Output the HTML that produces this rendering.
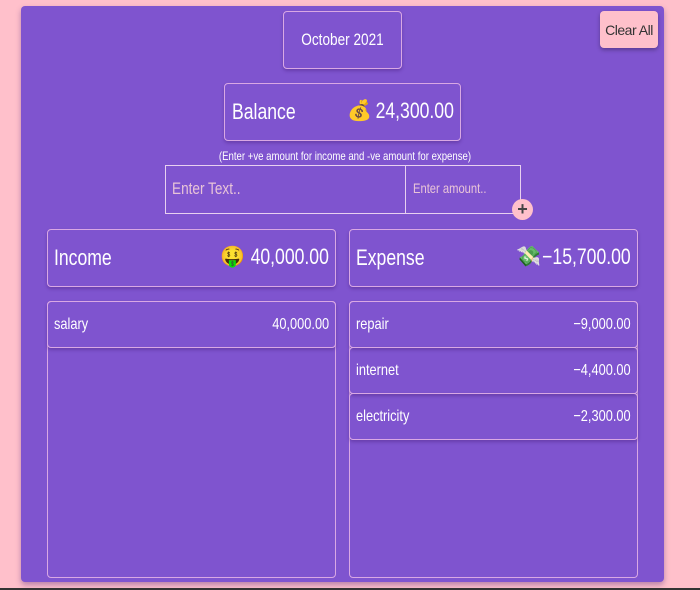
<!DOCTYPE html>
<html><head><style>
*{box-sizing:border-box;margin:0;padding:0}
body{width:700px;height:590px;background:#ffc0cb;position:relative;overflow:hidden;font-family:"Liberation Sans",sans-serif;color:#fff}
.main{position:absolute;left:21px;top:6px;width:643px;height:576px;background:#7f54cf;border-radius:4px;box-shadow:0 3px 6px rgba(80,40,120,.4)}
.b{position:absolute;border:1px solid #d9a8e4;border-radius:4px;box-shadow:0 2px 3px rgba(60,20,110,.35)}
.abs{position:absolute;white-space:nowrap}
.l{transform:scaleX(.8);transform-origin:left center}
.r{transform:scaleX(.8);transform-origin:right center}
.c{transform:scaleX(.8);transform-origin:center center}
.bottom{position:absolute;left:0;top:588px;width:700px;height:2px;background:#333}
</style></head><body>
<div class="main"></div>
<div class="b" style="left:283px;top:11px;width:119px;height:58px;display:flex;align-items:center;justify-content:center;font-size:17px"><span class="c" style="display:inline-block">October 2021</span></div>
<div class="abs" style="left:600px;top:11px;width:58px;height:37px;background:#ffc0cb;border-radius:4px;color:#333;font-size:14px;display:flex;align-items:center;justify-content:center;letter-spacing:-.5px;box-shadow:0 2px 4px rgba(0,0,0,.3)">Clear All</div>
<div class="b" style="left:224px;top:83px;width:237px;height:58px">
 <span class="abs l" style="left:7px;top:15px;font-size:22px">Balance</span>
 <span class="abs" style="left:122px;top:14px;font-size:20px">💰</span>
 <span class="abs r" style="right:6px;top:14px;font-size:22px">24,300.00</span>
</div>
<div class="abs c" style="left:0;width:690px;top:149px;text-align:center;font-size:12px">(Enter +ve amount for income and -ve amount for expense)</div>
<div class="abs" style="left:165px;top:165px;width:356px;height:49px;border:1px solid #e8d0f0"></div>
<div class="abs" style="left:405px;top:165px;width:1px;height:49px;background:#e8d0f0"></div>
<span class="abs l" style="left:172px;top:179px;font-size:17px;color:#e8c4d8">Enter Text..</span>
<span class="abs l" style="left:413px;top:180px;font-size:14px;color:#e8c4d8">Enter amount..</span>
<div class="abs" style="left:512px;top:199px;width:21px;height:21px;border-radius:50%;background:#ffc0cb;color:#444;font-size:18px;line-height:21px;text-align:center;font-weight:bold">+</div>
<div class="b" style="left:47px;top:229px;width:289px;height:58px">
 <span class="abs l" style="left:6px;top:15px;font-size:22px">Income</span>
 <span class="abs" style="left:172px;top:14px;font-size:20px">🤑</span>
 <span class="abs r" style="right:6px;top:14px;font-size:22px">40,000.00</span>
</div>
<div class="b" style="left:349px;top:229px;width:289px;height:58px">
 <span class="abs l" style="left:6px;top:15px;font-size:22px">Expense</span>
 <span class="abs" style="left:166px;top:14px;font-size:20px">💸</span>
 <span class="abs r" style="right:6px;top:14px;font-size:22px">−15,700.00</span>
</div>
<div class="b" style="left:47px;top:301px;width:289px;height:277px;box-shadow:none"></div>
<div class="b" style="left:349px;top:301px;width:289px;height:277px;box-shadow:none"></div>
<div class="b" style="left:47px;top:301px;width:289px;height:47px;font-size:16px"><span class="abs l" style="left:6px;top:14px">salary</span><span class="abs r" style="right:6px;top:14px">40,000.00</span></div>
<div class="b" style="left:349px;top:301px;width:289px;height:47px;font-size:16px"><span class="abs l" style="left:6px;top:14px">repair</span><span class="abs r" style="right:6px;top:14px">−9,000.00</span></div>
<div class="b" style="left:349px;top:347px;width:289px;height:47px;font-size:16px"><span class="abs l" style="left:6px;top:14px">internet</span><span class="abs r" style="right:6px;top:14px">−4,400.00</span></div>
<div class="b" style="left:349px;top:393px;width:289px;height:47px;font-size:16px"><span class="abs l" style="left:6px;top:14px">electricity</span><span class="abs r" style="right:6px;top:14px">−2,300.00</span></div>
<div class="bottom"></div>
</body></html>
